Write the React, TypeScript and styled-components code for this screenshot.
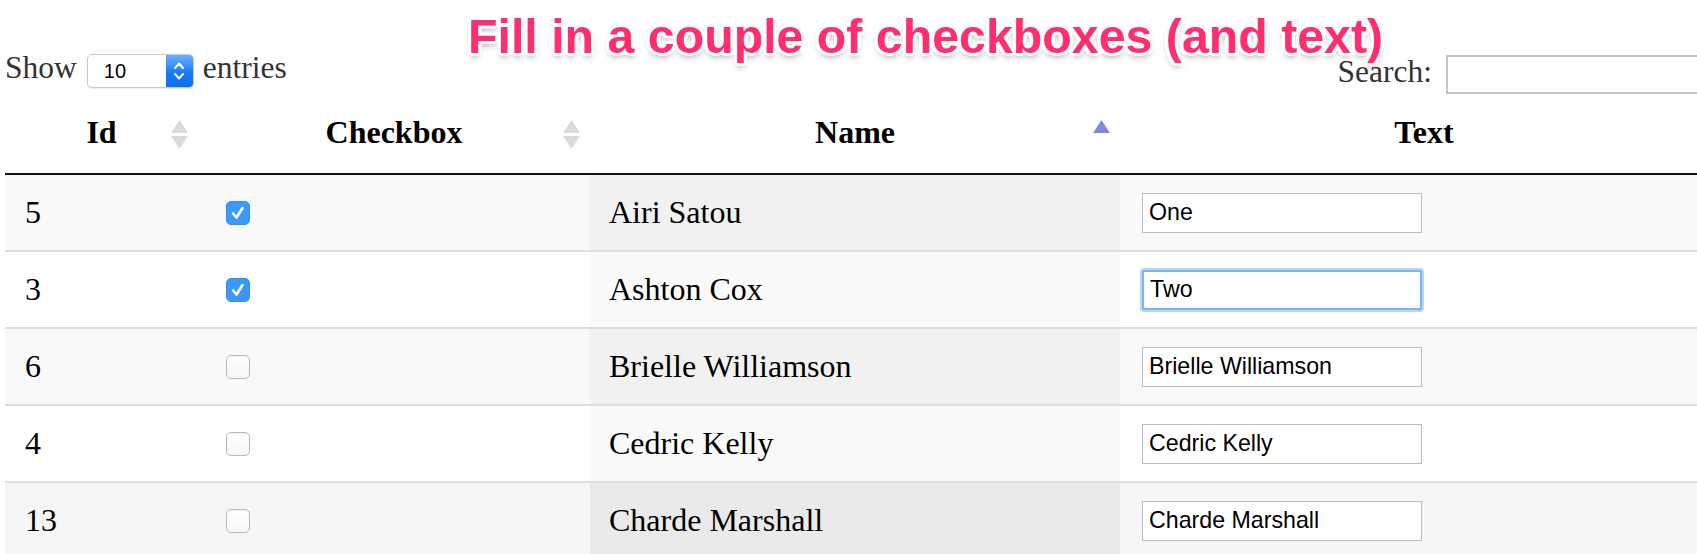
import React from "react";
import styled, { createGlobalStyle, css } from "styled-components";

const GlobalStyle = createGlobalStyle`
  *, *::before, *::after { box-sizing: border-box; }
  html, body { margin: 0; padding: 0; overflow: hidden; background: #fff; }
  body { font-family: "Liberation Serif", "Times New Roman", serif; }
`;

const Page = styled.div`
  position: relative;
  width: 1728px;
  padding: 54px 0 0 5px;
  color: #333;
  font-size: 31.5px;
`;

const Title = styled.h1`
  position: absolute;
  left: 468px;
  top: 12px;
  margin: 0;
  z-index: 2;
  font-family: "Liberation Sans", Arial, sans-serif;
  font-weight: 700;
  font-size: 48.3px;
  line-height: 1;
  color: #ff2e6e;
  white-space: nowrap;
  text-shadow:
    3px 0 #fff, -3px 0 #fff, 0 3px #fff, 0 -3px #fff,
    2px 2px #fff, -2px 2px #fff, 2px -2px #fff, -2px -2px #fff,
    3px 1.5px #fff, -3px 1.5px #fff, 3px -1.5px #fff, -3px -1.5px #fff,
    0 4px 6px rgba(0, 0, 0, 0.35), 0 0 4px rgba(0, 0, 0, 0.25);
`;

const Controls = styled.div`
  display: flex;
  justify-content: space-between;
  align-items: flex-start;
  height: 41px;
`;

const LengthControl = styled.div`
  display: flex;
  align-items: center;
  height: 34px;
`;

const LabelText = styled.span<{ $lift: number }>`
  line-height: 1.15;
  padding-bottom: ${(p) => p.$lift}px;
  white-space: nowrap;
`;

const SelectBox = styled.div`
  display: flex;
  align-items: stretch;
  width: 107px;
  height: 34px;
  margin: 0 9px 0 10px;
  border: 1px solid #c9c9c9;
  border-radius: 5px;
  background: #fff;
  overflow: hidden;
  box-shadow: 0 1px 1px rgba(0, 0, 0, 0.08);
`;

const SelectValue = styled.span`
  flex: 1;
  display: flex;
  align-items: center;
  padding-left: 16px;
  font-family: "Liberation Sans", Arial, sans-serif;
  font-size: 20px;
  color: #000;
`;

const Stepper = styled.span`
  width: 27px;
  display: flex;
  align-items: center;
  justify-content: center;
  background: linear-gradient(#6bb2fb, #1a7bf6 55%, #0b6ef4);
`;

const SearchControl = styled.div`
  display: flex;
  align-items: center;
  margin-top: 1px;
  height: 39px;
`;

const SearchInput = styled.input`
  width: 282px;
  height: 39px;
  margin-left: 14px;
  border: 2px solid #c3c3c3;
  background: #fff;
  outline: none;
`;

const Table = styled.table`
  width: 1723px;
  table-layout: fixed;
  border-collapse: separate;
  border-spacing: 0;
  color: #000;
  font-size: 32px;
`;

const Col = styled.col<{ $w: number }>`
  width: ${(p) => p.$w}px;
`;

const HeadCell = styled.th`
  height: 80px;
  padding: 0 10px 4px;
  border-bottom: 2px solid #111;
  font-size: 32px;
  font-weight: 700;
  vertical-align: middle;
`;

const HeadInner = styled.div`
  display: grid;
  grid-template-columns: 1fr auto 1fr;
  align-items: center;
`;

const SortIcon = styled.svg`
  justify-self: end;
  margin-top: 5px;
`;

const BodyRow = styled.tr``;

const Cell = styled.td<{ $bg: string; $pl: number }>`
  height: 77px;
  padding: 0 10px 0 ${(p) => p.$pl}px;
  background: ${(p) => p.$bg};
  border-bottom: 2px solid #ddd;
  vertical-align: middle;
  white-space: nowrap;
`;

const CheckBox = styled.span<{ $checked: boolean }>`
  display: flex;
  align-items: center;
  justify-content: center;
  width: 24px;
  height: 24px;
  margin: 1px 0 0 8px;
  border-radius: 5px;
  ${(p) =>
    p.$checked
      ? css`
          background: #3b99fc;
          border: 1px solid #2f8ff5;
        `
      : css`
          background: linear-gradient(#fff, #f7f7f7);
          border: 1px solid #b9b9b9;
          box-shadow: inset 0 1px 1px rgba(0, 0, 0, 0.05);
        `}
`;

const TextInput = styled.input<{ $focused?: boolean }>`
  display: block;
  width: 280px;
  height: 40px;
  padding: 0 6px;
  font-family: "Liberation Sans", Arial, sans-serif;
  font-size: 23.2px;
  color: #000;
  background: #fff;
  outline: none;
  ${(p) =>
    p.$focused
      ? css`
          border: 2px solid #80b3f2;
          border-radius: 2px;
          box-shadow: 0 0 0 2px rgba(128, 179, 242, 0.55);
        `
      : css`
          border: 1px solid #bdbdbd;
        `}
`;

type Row = { id: number; checked: boolean; name: string; text: string };

const rows: Row[] = [
  { id: 5, checked: true, name: "Airi Satou", text: "One" },
  { id: 3, checked: true, name: "Ashton Cox", text: "Two" },
  { id: 6, checked: false, name: "Brielle Williamson", text: "Brielle Williamson" },
  { id: 4, checked: false, name: "Cedric Kelly", text: "Cedric Kelly" },
  { id: 13, checked: false, name: "Charde Marshall", text: "Charde Marshall" },
];

const BothArrows = () => (
  <SortIcon width="17" height="29" viewBox="0 0 17 29">
    <polygon points="8.5,0 17,13 0,13" fill="#dadada" />
    <polygon points="0,16 17,16 8.5,29" fill="#dadada" />
  </SortIcon>
);

const AscArrow = () => (
  <SortIcon width="17" height="29" viewBox="0 0 17 29">
    <polygon points="8.5,0 17,13 0,13" fill="#8188e0" />
  </SortIcon>
);

const Check = () => (
  <svg width="18" height="18" viewBox="0 0 18 18">
    <path d="M4 9.5 L7.5 13.5 L13.5 4" fill="none" stroke="#fff" strokeWidth="2.6" strokeLinecap="round" strokeLinejoin="round" />
  </svg>
);

const Chevrons = () => (
  <svg width="12" height="22" viewBox="0 0 12 22">
    <path d="M2 8 L6 3.5 L10 8" fill="none" stroke="#fff" strokeWidth="2" strokeLinecap="round" strokeLinejoin="round" />
    <path d="M2 14 L6 18.5 L10 14" fill="none" stroke="#fff" strokeWidth="2" strokeLinecap="round" strokeLinejoin="round" />
  </svg>
);

function colors(index: number, hovered: boolean) {
  if (hovered) return { row: "#f6f6f6", sorted: "#eaeaea" };
  return index % 2 === 0 ? { row: "#f9f9f9", sorted: "#f1f1f1" } : { row: "#ffffff", sorted: "#fafafa" };
}

export default function App() {
  return (
    <>
      <GlobalStyle />
      <Page>
        <Title>Fill in a couple of checkboxes (and text)</Title>
        <Controls>
          <LengthControl>
            <LabelText $lift={5}>Show</LabelText>
            <SelectBox>
              <SelectValue>10</SelectValue>
              <Stepper>
                <Chevrons />
              </Stepper>
            </SelectBox>
            <LabelText $lift={5}>entries</LabelText>
          </LengthControl>
          <SearchControl>
            <LabelText $lift={4}>Search:</LabelText>
            <SearchInput type="search" readOnly />
          </SearchControl>
        </Controls>
        <Table>
          <colgroup>
            <Col $w={193} />
            <Col $w={392} />
            <Col $w={530} />
            <Col $w={608} />
          </colgroup>
          <thead>
            <tr>
              <HeadCell>
                <HeadInner>
                  <span />
                  <span>Id</span>
                  <BothArrows />
                </HeadInner>
              </HeadCell>
              <HeadCell>
                <HeadInner>
                  <span />
                  <span>Checkbox</span>
                  <BothArrows />
                </HeadInner>
              </HeadCell>
              <HeadCell>
                <HeadInner>
                  <span />
                  <span>Name</span>
                  <AscArrow />
                </HeadInner>
              </HeadCell>
              <HeadCell>
                <HeadInner>
                  <span />
                  <span>Text</span>
                  <span />
                </HeadInner>
              </HeadCell>
            </tr>
          </thead>
          <tbody>
            {rows.map((r, i) => {
              const c = colors(i, i === 4);
              return (
                <BodyRow key={r.id}>
                  <Cell $bg={c.row} $pl={20}>{r.id}</Cell>
                  <Cell $bg={c.row} $pl={20}>
                    <CheckBox $checked={r.checked} role="checkbox" aria-checked={r.checked}>
                      {r.checked && <Check />}
                    </CheckBox>
                  </Cell>
                  <Cell $bg={c.sorted} $pl={19}>{r.name}</Cell>
                  <Cell $bg={c.row} $pl={22}>
                    <TextInput type="text" defaultValue={r.text} $focused={i === 1} />
                  </Cell>
                </BodyRow>
              );
            })}
          </tbody>
        </Table>
      </Page>
    </>
  );
}
